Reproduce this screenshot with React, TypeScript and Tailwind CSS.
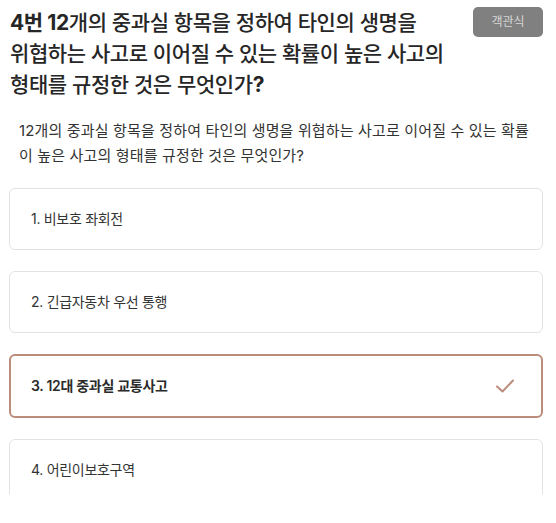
const font = {
  fontFamily: '"Inter", "Noto Sans CJK KR", "Noto Sans", sans-serif',
};

const options = [
  { no: 1, text: "비보호 좌회전" },
  { no: 2, text: "긴급자동차 우선 통행" },
  { no: 3, text: "12대 중과실 교통사고" },
  { no: 4, text: "어린이보호구역" },
];

function CheckIcon() {
  return (
    <svg width="20" height="16" viewBox="0 0 20 16" fill="none">
      <path
        d="M2 8.5 L7.5 13.5 L18 2.5"
        stroke="#bb8c7c"
        strokeWidth="2"
        strokeLinecap="round"
        strokeLinejoin="round"
      />
    </svg>
  );
}

export default function App() {
  const selected = 3;

  return (
    <div className="w-[556px] h-[523px] bg-white" style={font}>
      <div className="h-[494px] overflow-hidden pt-[7px] pl-[9px] pr-[13px]">
        <div className="flex items-start justify-between">
          <h1 className="pl-[1px] text-[21px] leading-[31px] font-medium text-[#262626] tracking-[-0.4px]">
            <span className="font-bold">4번 12</span>개의 중과실 항목을 정하여 타인의 생명을
            <br />
            위협하는 사고로 이어질 수 있는 확률이 높은 사고의
            <br />
            형태를 규정한 것은 무엇인가<span className="font-bold">?</span>
          </h1>
          <span className="flex h-[30px] w-[70px] shrink-0 items-center justify-center rounded-[5px] bg-[#808080] text-[12px] text-[#d6d6d6]">
            객관식
          </span>
        </div>

        <p className="mt-[18px] pl-[10px] text-[15px] leading-[25px] text-[#333333] tracking-[0.15px]">
          12개의 중과실 항목을 정하여 타인의 생명을 위협하는 사고로 이어질 수 있는 확률
          <br />
          이 높은 사고의 형태를 규정한 것은 무엇인가?
        </p>

        <div className="mt-[20px] flex flex-col gap-[21px]">
          {options.map((o) => {
            const isSel = o.no === selected;
            return (
              <div
                key={o.no}
                className={
                  isSel
                    ? "flex items-center justify-between rounded-[6px] border-2 border-[#bb8c7c] py-[19px] pl-[20px] pr-[26px]"
                    : "flex items-center justify-between rounded-[6px] border border-[#e2e2e2] py-[19px] pl-[21px] pr-[27px]"
                }
              >
                <span
                  className={
                    isSel
                      ? "text-[14px] leading-[22px] font-semibold text-[#2b2b2b] tracking-[-0.3px]"
                      : "text-[14px] leading-[22px] text-[#333333] tracking-[-0.3px]"
                  }
                >
                  {o.no}. {o.text}
                </span>
                {isSel && <CheckIcon />}
              </div>
            );
          })}
        </div>
      </div>
    </div>
  );
}
